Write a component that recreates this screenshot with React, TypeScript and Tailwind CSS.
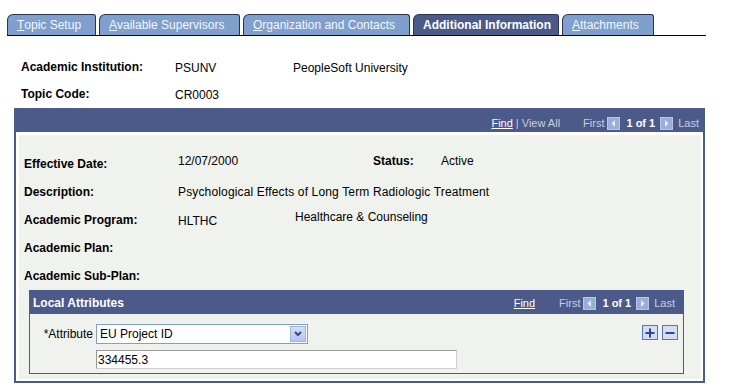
import { Fragment } from 'react';

const tabs = [
  { key: 'T', rest: 'opic Setup', w: 'w-[89px]' },
  { key: 'A', rest: 'vailable Supervisors', w: 'w-[141px]' },
  { key: 'O', rest: 'rganization and Contacts', w: 'w-[167px]' },
  { key: '', rest: 'Additional Information', w: 'w-[146px]', active: true },
  { key: 'A', rest: 'ttachments', w: 'w-[92px]' },
];

function NavArrow({ dir }: { dir: 'left' | 'right' }) {
  return (
    <svg width="13" height="13" viewBox="0 0 13 13" className="shrink-0">
      <rect x="0" y="0" width="13" height="13" fill="#98b0d6" />
      <rect x="0.5" y="0.5" width="12" height="12" fill="none" stroke="#b4c6e2" />
      {dir === 'left' ? (
        <polygon points="8,3 8,10 4.5,6.5" fill="#e6ecf6" />
      ) : (
        <polygon points="5,3 5,10 8.5,6.5" fill="#e6ecf6" />
      )}
    </svg>
  );
}

function Pager({ viewAll }: { viewAll?: boolean }) {
  return (
    <div className="flex items-center text-[11px] text-[#c9cfdf]">
      <span className="text-white underline">Find</span>
      {viewAll ? <span className="ml-[3px] mr-[23px]">| View All</span> : <span className="mr-[24px]" />}
      <span>First</span>
      <span className="ml-[3px]"><NavArrow dir="left" /></span>
      <span className="ml-[6px] mr-[5px] font-bold text-white">1 of 1</span>
      <NavArrow dir="right" />
      <span className="ml-[5px]">Last</span>
    </div>
  );
}

function Row({ label, children, h = 'h-[28px]' }: { label: string; children?: React.ReactNode; h?: string }) {
  return (
    <div className={`flex items-center ${h}`}>
      <div className="w-[154px] font-bold">{label}</div>
      {children}
    </div>
  );
}

export default function App() {
  return (
    <div className="w-[732px] h-[388px] bg-white text-black text-[12px] font-['Liberation_Sans',Arial,sans-serif] overflow-hidden">
      {/* Tabs */}
      <div className="pt-[14px] pl-[7px]">
        <div className="flex items-end gap-[3px] w-[699px] border-b border-black">
          {tabs.map((t) => (
            <div
              key={t.rest}
              className={`${t.w} h-[21px] rounded-tl-[6px] rounded-tr-[3px] border border-b-0 border-[#2b3553] flex items-center pl-[9px] text-[12px] ${
                t.active ? 'bg-[#4b5a89] text-white font-bold' : 'bg-[#7f9fcd] text-[#f4f6fb]'
              }`}
            >
              {t.key && <span className="underline">{t.key}</span>}
              {t.rest}
            </div>
          ))}
        </div>
      </div>

      {/* Key fields */}
      <div className="pl-[21px] pt-[18px]">
        <Row label="Academic Institution:" h="h-[26px]">
          <span className="w-[118px] relative top-[1px]">PSUNV</span>
          <span className="relative top-[1px]">PeopleSoft University</span>
        </Row>
        <Row label="Topic Code:">
          <span className="relative top-[1px]">CR0003</span>
        </Row>
      </div>

      {/* Main scroll area */}
      <div className="ml-[14px] w-[691px] border-x-2 border-b-2 border-[#4b5a89]">
        <div className="h-[24px] bg-[#4b5a89] flex items-center justify-end pr-[4px] pt-[6px]">
          <Pager viewAll />
        </div>
        <div className="p-[3px] pr-[2px] pb-[2px] bg-white">
          <div className="bg-[#f0f2ed] pt-[15px] pb-[5px]">
            <div className="pl-[5px]">
              <Row label="Effective Date:">
                <span className="w-[195px] relative -top-[3px]">12/07/2000</span>
                <span className="w-[68px] font-bold relative -top-[3px]">Status:</span>
                <span className="relative -top-[3px]">Active</span>
              </Row>
              <Row label="Description:">
                <span className="tracking-[0.15px]">Psychological Effects of Long Term Radiologic Treatment</span>
              </Row>
              <Row label="Academic Program:">
                <span className="w-[117px] relative top-[1px]">HLTHC</span>
                <span className="relative -top-[3px]">Healthcare &amp; Counseling</span>
              </Row>
              <Row label="Academic Plan:" />
              <Row label="Academic Sub-Plan:" />
            </div>

            {/* Local Attributes */}
            <div className="ml-[10px] w-[655px] border border-[#4b5a89]">
              <div className="h-[23px] bg-[#4b5a89] flex items-center justify-between pl-[3px] pr-[8px]">
                <span className="text-white font-bold text-[12px]">Local Attributes</span>
                <div className="pt-[2px]">
                  <Pager />
                </div>
              </div>
              <div className="flex pt-[10px] pb-[4px] pr-[5px]">
                <div className="flex flex-col gap-[6px]">
                  <div className="flex items-center">
                    <span className="w-[66px] text-right pr-[3px]">*Attribute</span>
                    <div className="w-[212px] h-[20px] border border-[#7f9fcd] bg-white flex items-center justify-between">
                      <span className="pl-[3px]">EU Project ID</span>
                      <div className="w-[16px] h-[16px] mr-[1px] bg-gradient-to-b from-[#d5e0f8] to-[#b3c6f0] border border-[#9fb4e0] flex items-center justify-center">
                        <svg width="8" height="6" viewBox="0 0 8 6">
                          <polyline points="1,1 4,4 7,1" fill="none" stroke="#3a4a78" strokeWidth="2" />
                        </svg>
                      </div>
                    </div>
                  </div>
                  <div className="flex">
                    <span className="w-[66px]" />
                    <div className="w-[361px] h-[19px] border border-[#9a9a9a] border-b-[#cfcfcf] border-r-[#cfcfcf] bg-white flex items-center pl-[1px]">
                      334455.3
                    </div>
                  </div>
                </div>
                <div className="ml-auto flex gap-[4px] pt-[1px]">
                  {['+', '-'].map((s) => (
                    <div key={s} className="w-[16px] h-[15px] border border-[#5a72c0] bg-[#d3ddf6] flex items-center justify-center">
                      <svg width="10" height="10" viewBox="0 0 10 10">
                        <rect x="0.5" y="4" width="9" height="2" fill="#33458a" />
                        {s === '+' && <rect x="4" y="0.5" width="2" height="9" fill="#33458a" />}
                      </svg>
                    </div>
                  ))}
                </div>
              </div>
            </div>
          </div>
        </div>
      </div>
    </div>
  );
}
